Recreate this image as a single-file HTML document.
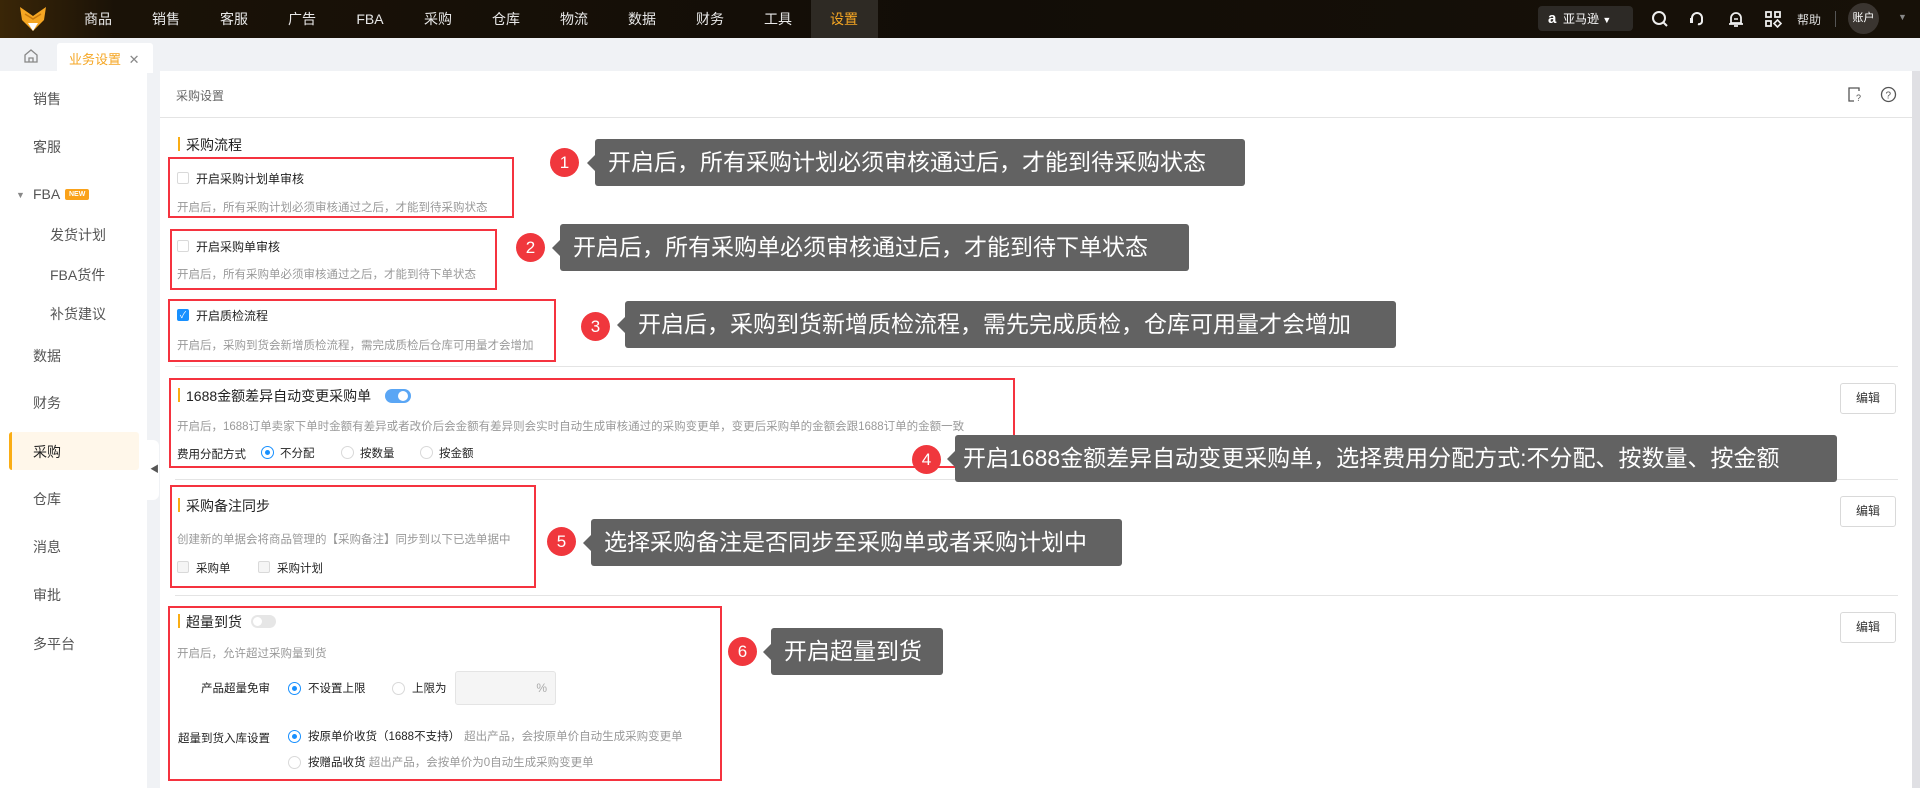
<!DOCTYPE html>
<html><head><meta charset="utf-8">
<style>
*{margin:0;padding:0;box-sizing:border-box}
body{width:1920px;height:788px;overflow:hidden;background:#f0f2f5;font-family:"Liberation Sans","Noto Sans CJK SC",sans-serif;position:relative;color:#333}
.a{position:absolute;white-space:nowrap}
#nav{left:0;top:0;width:1920px;height:38px;background:linear-gradient(90deg,#3a2607 0%,#1a1207 6%,#120d07 50%,#171108 100%)}
.ni{top:0;height:38px;line-height:38px;color:#e8e8e8;font-size:14px;text-align:center;width:60px}
.side{font-size:14px;color:#555}
.lbl{font-size:12px;color:#222}
.desc{font-size:11.5px;color:#999}
.cb{width:12px;height:12px;border:1px solid #d9d9d9;border-radius:2px;background:#fff}
.rd{width:13px;height:13px;border:1px solid #d9d9d9;border-radius:50%;background:#fff}
.rd.on{border-color:#1890ff}
.rd.on::after{content:"";position:absolute;left:3px;top:3px;width:5px;height:5px;border-radius:50%;background:#1890ff}
.red{border:2px solid #f5333f}
.bar{width:2px;height:14px;background:#faad14}
.tt{font-size:14px;color:#222}
.hr{height:1px;background:#e4e4e4;left:175px;width:1723px}
.btn{width:56px;height:31px;border:1px solid #d9d9d9;border-radius:3px;background:#fff;font-size:12px;color:#333;text-align:center;line-height:29px}
.num{width:29px;height:29px;border-radius:50%;background:#f0373d;color:#fff;font-size:17px;text-align:center;line-height:29px}
.call{background:#626262;color:#fff;font-size:23px;border-radius:3px;padding-left:13px;line-height:47px;height:47px}
.call::before{content:"";position:absolute;left:-8px;top:50%;margin-top:-8px;border:8px solid transparent;border-left:0;border-right-color:#626262}
</style></head><body>
<div id="nav" class="a"></div>
<svg class="a" style="left:18px;top:6px" width="30" height="26" viewBox="0 0 30 26"><path d="M2 1 L15 10 L28 1 L26 14 L15 25 L4 14Z" fill="#f5a623"/><path d="M10 17 L15 25 L20 17Z" fill="#fff"/><path d="M7 8 L15 13 L23 8" stroke="#c7790c" stroke-width="1.5" fill="none"/></svg>
<div class="a ni" style="left:68px">商品</div>
<div class="a ni" style="left:136px">销售</div>
<div class="a ni" style="left:204px">客服</div>
<div class="a ni" style="left:272px">广告</div>
<div class="a ni" style="left:340px">FBA</div>
<div class="a ni" style="left:408px">采购</div>
<div class="a ni" style="left:476px">仓库</div>
<div class="a ni" style="left:544px">物流</div>
<div class="a ni" style="left:612px">数据</div>
<div class="a ni" style="left:680px">财务</div>
<div class="a ni" style="left:748px">工具</div>
<div class="a" style="left:811px;top:0;width:67px;height:38px;background:#2e2a24"></div>
<div class="a ni" style="left:814px;color:#f5a623">设置</div>
<div class="a" style="left:1538px;top:6px;width:95px;height:25px;background:#2d2a26;border-radius:4px;color:#fff;font-size:12px;line-height:25px;padding-left:10px"><b style="font-size:15px">a</b>&nbsp; 亚马逊 <span style="font-size:9px">▼</span></div>
<svg class="a" style="left:1651px;top:10px" width="18" height="18" viewBox="0 0 18 18"><circle cx="8" cy="8" r="6" stroke="#eee" stroke-width="2" fill="none"/><path d="M12.5 12.5 L16 16" stroke="#eee" stroke-width="2"/></svg>
<svg class="a" style="left:1688px;top:10px" width="18" height="18" viewBox="0 0 18 18"><path d="M4 10 V8 a5 5 0 0 1 10 0 V11 a3 3 0 0 1 -4 3" stroke="#eee" stroke-width="2" fill="none"/><rect x="2" y="8" width="3" height="5" fill="#eee"/></svg>
<svg class="a" style="left:1727px;top:10px" width="18" height="18" viewBox="0 0 18 18"><path d="M4 13 V8 a5 5 0 0 1 10 0 V13 Z M2 14 H16 M7 16 H11" stroke="#eee" stroke-width="1.8" fill="none"/><path d="M7 9 H11" stroke="#eee" stroke-width="1.5"/></svg>
<svg class="a" style="left:1764px;top:10px" width="18" height="18" viewBox="0 0 18 18"><rect x="2" y="2" width="5" height="5" stroke="#eee" stroke-width="1.8" fill="none"/><rect x="11" y="2" width="5" height="5" stroke="#eee" stroke-width="1.8" fill="none"/><rect x="2" y="11" width="5" height="5" stroke="#eee" stroke-width="1.8" fill="none"/><path d="M13.5 10 L17 13.5 L13.5 17 L10 13.5Z" stroke="#eee" stroke-width="1.6" fill="none"/></svg>
<div class="a" style="left:1797px;top:11px;font-size:12px;color:#ddd">帮助</div>
<div class="a" style="left:1835px;top:11px;width:1px;height:16px;background:#555"></div>
<div class="a" style="left:1848px;top:3px;width:31px;height:31px;border-radius:50%;background:#3a3530;color:#fff;font-size:11px;text-align:center;line-height:31px">账户</div>
<div class="a" style="left:1898px;top:12px;font-size:9px;color:#888">▼</div>

<!-- tabs -->
<svg class="a" style="left:23px;top:48px" width="16" height="16" viewBox="0 0 16 16"><path d="M2 7 L8 2 L14 7 V14 H2Z M6 14 V10 H10 V14" stroke="#888" stroke-width="1.3" fill="none"/></svg>
<div class="a" style="left:57px;top:43px;width:96px;height:30px;background:#fff;border-radius:3px 3px 0 0"></div>
<div class="a" style="left:69px;top:49px;font-size:13px;color:#f5a623">业务设置 <span style="color:#888;margin-left:4px">✕</span></div>

<!-- sidebar -->
<div class="a" style="left:0;top:71px;width:147px;height:717px;background:#fff"></div>
<div class="a" style="left:9px;top:432px;width:130px;height:38px;background:#fff7ea;border-radius:3px;border-left:3px solid #faad14"></div>
<div class="a side" style="left:33px;top:89px">销售</div>
<div class="a side" style="left:33px;top:137px">客服</div>
<div class="a" style="left:16px;top:190px;font-size:9px;color:#888">▼</div>
<div class="a side" style="left:33px;top:186px">FBA</div>
<div class="a" style="left:65px;top:189px;background:#faa21a;color:#fff;font-size:7px;font-weight:bold;padding:2px 4px;border-radius:2px">NEW</div>
<div class="a side" style="left:50px;top:225px">发货计划</div>
<div class="a side" style="left:50px;top:265px">FBA货件</div>
<div class="a side" style="left:50px;top:304px">补货建议</div>
<div class="a side" style="left:33px;top:346px">数据</div>
<div class="a side" style="left:33px;top:393px">财务</div>
<div class="a side" style="left:33px;top:442px;color:#222">采购</div>
<div class="a side" style="left:33px;top:489px">仓库</div>
<div class="a side" style="left:33px;top:537px">消息</div>
<div class="a side" style="left:33px;top:585px">审批</div>
<div class="a side" style="left:33px;top:634px">多平台</div>
<div class="a" style="left:147px;top:440px;width:12px;height:60px;background:#fff;border-radius:0 6px 6px 0"></div>
<div class="a" style="left:150px;top:462px;font-size:9px;color:#555">◀</div>

<!-- content -->
<div class="a" style="left:160px;top:71px;width:1752px;height:717px;background:#fff"></div>
<div class="a" style="left:1912px;top:71px;width:8px;height:717px;background:#e0e0e4"></div>
<div class="a" style="left:176px;top:87px;font-size:12px;color:#666">采购设置</div>
<div class="a" style="left:160px;top:117px;width:1752px;height:1px;background:#e4e4e4"></div>
<svg class="a" style="left:1847px;top:86px" width="16" height="17" viewBox="0 0 16 17"><path d="M12 5 V2 H2 V15 H7" stroke="#555" stroke-width="1.3" fill="none"/><text x="9" y="15" font-size="9" fill="#555" font-family="Liberation Sans">?</text></svg>
<svg class="a" style="left:1880px;top:86px" width="17" height="17" viewBox="0 0 17 17"><circle cx="8.5" cy="8.5" r="7" stroke="#555" stroke-width="1.3" fill="none"/><text x="5.5" y="12.5" font-size="10" fill="#555" font-family="Liberation Sans">?</text></svg>

<div class="a bar" style="left:178px;top:137px"></div>
<div class="a tt" style="left:186px;top:135px">采购流程</div>
<div class="a red" style="left:168px;top:157px;width:346px;height:61px"></div>
<div class="a cb" style="left:177px;top:172px"></div>
<div class="a lbl" style="left:196px;top:170px">开启采购计划单审核</div>
<div class="a desc" style="left:177px;top:199px">开启后，所有采购计划必须审核通过之后，才能到待采购状态</div>
<div class="a red" style="left:170px;top:229px;width:327px;height:61px"></div>
<div class="a cb" style="left:177px;top:240px"></div>
<div class="a lbl" style="left:196px;top:238px">开启采购单审核</div>
<div class="a desc" style="left:177px;top:266px">开启后，所有采购单必须审核通过之后，才能到待下单状态</div>
<div class="a red" style="left:168px;top:299px;width:388px;height:63px"></div>
<div class="a cb" style="left:177px;top:309px;background:#1890ff;border-color:#1890ff;color:#fff;font-size:9px;line-height:10px;text-align:center">✓</div>
<div class="a lbl" style="left:196px;top:307px">开启质检流程</div>
<div class="a desc" style="left:177px;top:337px">开启后，采购到货会新增质检流程，需完成质检后仓库可用量才会增加</div>
<div class="a hr" style="top:366px"></div>

<div class="a red" style="left:169px;top:378px;width:846px;height:90px"></div>
<div class="a bar" style="left:178px;top:388px"></div>
<div class="a tt" style="left:186px;top:386px">1688金额差异自动变更采购单</div>
<div class="a" style="left:385px;top:389px;width:26px;height:14px;border-radius:7px;background:#5aa6f5"></div>
<div class="a" style="left:398px;top:391px;width:10px;height:10px;border-radius:50%;background:#fff"></div>
<div class="a desc" style="left:177px;top:418px">开启后，1688订单卖家下单时金额有差异或者改价后会金额有差异则会实时自动生成审核通过的采购变更单，变更后采购单的金额会跟1688订单的金额一致</div>
<div class="a rd on" style="left:261px;top:446px"></div>
<div class="a rd" style="left:341px;top:446px"></div>
<div class="a rd" style="left:420px;top:446px"></div>
<div class="a lbl" style="left:177px;top:446px;font-size:11.5px">费用分配方式</div>
<div class="a lbl" style="left:280px;top:445px;font-size:11.5px">不分配</div>
<div class="a lbl" style="left:360px;top:445px;font-size:11.5px">按数量</div>
<div class="a lbl" style="left:439px;top:445px;font-size:11.5px">按金额</div>
<div class="a btn" style="left:1840px;top:383px">编辑</div>
<div class="a hr" style="top:479px"></div>

<div class="a red" style="left:170px;top:485px;width:366px;height:103px"></div>
<div class="a bar" style="left:178px;top:498px"></div>
<div class="a tt" style="left:186px;top:496px">采购备注同步</div>
<div class="a desc" style="left:177px;top:531px">创建新的单据会将商品管理的【采购备注】同步到以下已选单据中</div>
<div class="a cb" style="left:177px;top:561px;background:#f5f5f5"></div>
<div class="a lbl" style="left:196px;top:560px;font-size:11.5px">采购单</div>
<div class="a cb" style="left:258px;top:561px;background:#f5f5f5"></div>
<div class="a lbl" style="left:277px;top:560px;font-size:11.5px">采购计划</div>
<div class="a btn" style="left:1840px;top:496px">编辑</div>
<div class="a hr" style="top:595px"></div>

<div class="a red" style="left:168px;top:606px;width:554px;height:175px"></div>
<div class="a bar" style="left:178px;top:614px"></div>
<div class="a tt" style="left:186px;top:612px">超量到货</div>
<div class="a" style="left:251px;top:615px;width:25px;height:13px;border-radius:7px;background:#e6e6e6"></div>
<div class="a" style="left:253px;top:617px;width:9px;height:9px;border-radius:50%;background:#fff"></div>
<div class="a desc" style="left:177px;top:645px">开启后，允许超过采购量到货</div>
<div class="a lbl" style="left:201px;top:680px;font-size:11.5px">产品超量免审</div>
<div class="a rd on" style="left:288px;top:682px"></div>
<div class="a lbl" style="left:308px;top:680px;font-size:11.5px">不设置上限</div>
<div class="a rd" style="left:392px;top:682px"></div>
<div class="a lbl" style="left:412px;top:680px;font-size:11.5px">上限为</div>
<div class="a" style="left:455px;top:671px;width:101px;height:34px;background:#f5f5f5;border:1px solid #e4e4e4;border-radius:3px;font-size:12px;color:#aaa;text-align:right;line-height:32px;padding-right:8px">%</div>
<div class="a lbl" style="left:178px;top:730px;font-size:11.5px">超量到货入库设置</div>
<div class="a rd on" style="left:288px;top:730px"></div>
<div class="a lbl" style="left:308px;top:728px;font-size:11.5px">按原单价收货（1688不支持）<span style="color:#999;margin-left:4px">超出产品，会按原单价自动生成采购变更单</span></div>
<div class="a rd" style="left:288px;top:756px"></div>
<div class="a lbl" style="left:308px;top:754px;font-size:11.5px">按赠品收货 <span style="color:#999">超出产品，会按单价为0自动生成采购变更单</span></div>
<div class="a btn" style="left:1840px;top:612px">编辑</div>

<!-- callouts -->
<div class="a num" style="left:550px;top:148px">1</div>
<div class="a call" style="left:595px;top:139px;width:650px">开启后，所有采购计划必须审核通过后，才能到待采购状态</div>
<div class="a num" style="left:516px;top:233px">2</div>
<div class="a call" style="left:560px;top:224px;width:629px">开启后，所有采购单必须审核通过后，才能到待下单状态</div>
<div class="a num" style="left:581px;top:312px">3</div>
<div class="a call" style="left:625px;top:301px;width:771px">开启后，采购到货新增质检流程，需先完成质检，仓库可用量才会增加</div>
<div class="a num" style="left:912px;top:445px">4</div>
<div class="a call" style="left:955px;top:435px;width:882px;padding-left:8px">开启1688金额差异自动变更采购单，选择费用分配方式:不分配、按数量、按金额</div>
<div class="a num" style="left:547px;top:527px">5</div>
<div class="a call" style="left:591px;top:519px;width:531px">选择采购备注是否同步至采购单或者采购计划中</div>
<div class="a num" style="left:728px;top:637px">6</div>
<div class="a call" style="left:771px;top:628px;width:172px">开启超量到货</div>
</body></html>
